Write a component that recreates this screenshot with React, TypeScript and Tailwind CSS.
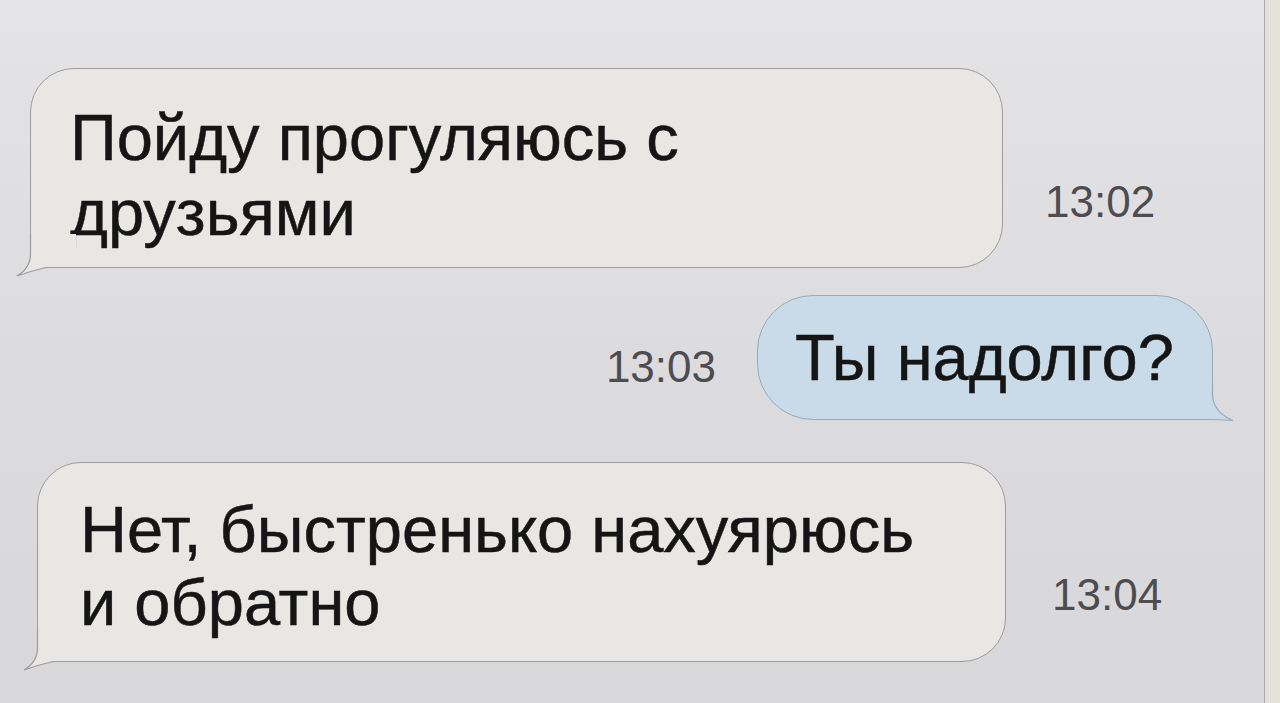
import React from "react";

const font = { fontFamily: '"Liberation Sans", Arial, sans-serif' };

function LeftTail() {
  return (
    <svg className="absolute left-[-15px] bottom-[-10px]" width="60" height="43" viewBox="0 0 60 43">
      <path d="M14.5 0 L14.5 20 Q14.5 34 1 42 Q15 37 30 33.5 L60 33.5 L60 0 Z" fill="#e8e7e4" />
      <path d="M14.5 0 L14.5 20 Q14.5 34 1 42 Q15 37 30 33.5 L60 33.5" fill="none" stroke="#9c9c9c" strokeWidth="1.2" />
    </svg>
  );
}

function RightTail() {
  return (
    <svg className="absolute right-[-23px] bottom-[-4px]" width="60" height="40" viewBox="0 0 60 40">
      <path d="M37.5 0 L37.5 12 Q38 29 58 37.5 Q44 36.5 30 36.5 L0 36.5 L0 0 Z" fill="#c9dbe9" />
      <path d="M37.5 0 L37.5 12 Q38 29 58 37.5 Q44 36.5 30 36.5 L0 36.5" fill="none" stroke="#98aab8" strokeWidth="1.2" />
    </svg>
  );
}

export default function App() {
  return (
    <div
      className="w-[1280px] h-[703px] overflow-hidden flex bg-gradient-to-b from-[#e4e4e6] via-[#dcdcde] to-[#d8d8da] text-[#151515]"
      style={font}
    >
      <div className="w-[1264px] flex flex-col pt-[68px]">
        {/* Row 1 */}
        <div className="flex items-start pl-[30px]">
          <div className="relative w-[973px] h-[200px] bg-[#e8e7e4] border border-[#9c9c9c] rounded-[44px] rounded-bl-none pl-[39px] pt-[31px]">
            <p className="text-[65px] leading-[75px] [-webkit-text-stroke:0.5px_#151515]">
              Пойду прогуляюсь с<br />друзьями
            </p>
            <LeftTail />
          </div>
          <span className="ml-[42px] mt-[112px] text-[44px] leading-none text-[#4d4d50]">13:02</span>
        </div>

        {/* Row 2 */}
        <div className="flex items-start justify-end pr-[51px] mt-[27px]">
          <span className="mr-[41px] mt-[50px] text-[44px] leading-none text-[#4d4d50]">13:03</span>
          <div className="relative w-[456px] h-[125px] bg-[#c9dbe9] border border-[#98aab8] rounded-[56px] rounded-br-none pl-[37px] pt-[24px]">
            <p className="text-[65px] leading-[75px] [-webkit-text-stroke:0.5px_#151515]">Ты надолго?</p>
            <RightTail />
          </div>
        </div>

        {/* Row 3 */}
        <div className="flex items-start pl-[37px] mt-[42px]">
          <div className="relative w-[969px] h-[200px] bg-[#e8e7e4] border border-[#9c9c9c] rounded-[44px] rounded-bl-none pl-[42px] pt-[30px]">
            <p className="text-[65px] leading-[73px] [-webkit-text-stroke:0.5px_#151515]">
              Нет, быстренько нахуярюсь<br />и обратно
            </p>
            <LeftTail />
          </div>
          <span className="ml-[46px] mt-[111px] text-[44px] leading-none text-[#4d4d50]">13:04</span>
        </div>
      </div>
      <div className="flex-1 border-l border-[#a9a9a9] bg-[#e2e1dc]" />
    </div>
  );
}
